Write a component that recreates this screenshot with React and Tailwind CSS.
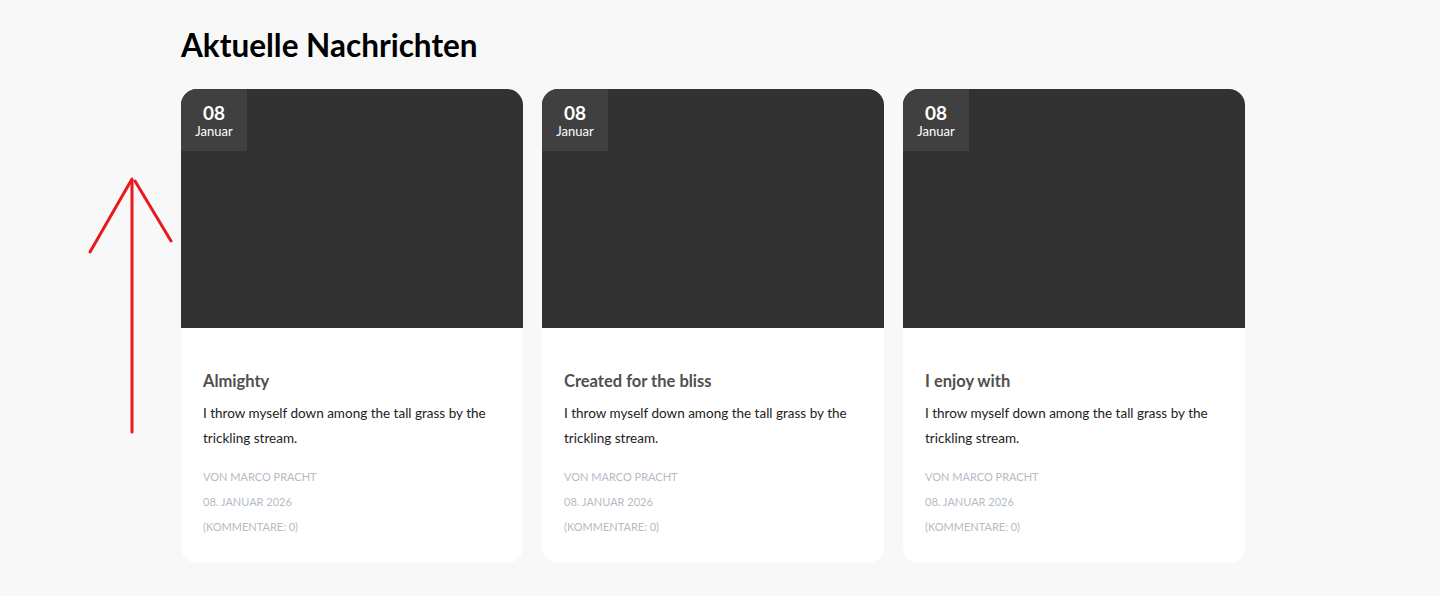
import React from "react";

const posts = [
  { title: "Almighty" },
  { title: "Created for the bliss" },
  { title: "I enjoy with" },
];

const NewsCard = ({ title }) => {
  return (
    <div className="bg-white rounded-2xl overflow-hidden flex flex-col">
      <div className="h-[239px] bg-[#323232]">
        <div className="w-[66px] h-[62px] bg-[#404040] flex flex-col items-center justify-center pt-[3px] text-white">
          <span className="text-[19px] font-bold leading-[20px]">08</span>
          <span className="text-[13px] leading-[17px]">Januar</span>
        </div>
      </div>
      <div className="px-[22px] pt-[42px] pb-[24px]">
        <h3 className="text-[16.5px] font-bold text-[#505050] leading-[22px]">{title}</h3>
        <p className="mt-[9px] text-[13.5px] leading-[25px] text-[#222]">
          I throw myself down among the tall grass by the trickling stream.
        </p>
        <div className="mt-[13px] text-[11px] leading-[25px] uppercase text-[#b4bcc6]">
          <div>von Marco Pracht</div>
          <div>08. Januar 2026</div>
          <div>(Kommentare: 0)</div>
        </div>
      </div>
    </div>
  );
};

const App = () => {
  return (
    <div className="relative w-full min-h-[596px] bg-[#f8f8f8] font-['Lato','Liberation_Sans',sans-serif]">
      <div className="ml-[181px] w-[1064px] pt-[26px]">
        <h2 className="text-[31.5px] font-bold text-black leading-[38px]">Aktuelle Nachrichten</h2>
        <div className="mt-[25px] grid grid-cols-3 gap-[19px]">
          {posts.map((p) => (
            <NewsCard key={p.title} title={p.title} />
          ))}
        </div>
      </div>
      <svg className="absolute left-[80px] top-[170px]" width="100" height="270" viewBox="80 170 100 270">
        <g stroke="#e8191c" strokeWidth="3" strokeLinecap="round" fill="none">
          <line x1="132" y1="180" x2="132" y2="432" />
          <line x1="132" y1="179" x2="90" y2="252" />
          <line x1="135" y1="181" x2="171" y2="241" />
        </g>
      </svg>
    </div>
  );
};

export default App;
